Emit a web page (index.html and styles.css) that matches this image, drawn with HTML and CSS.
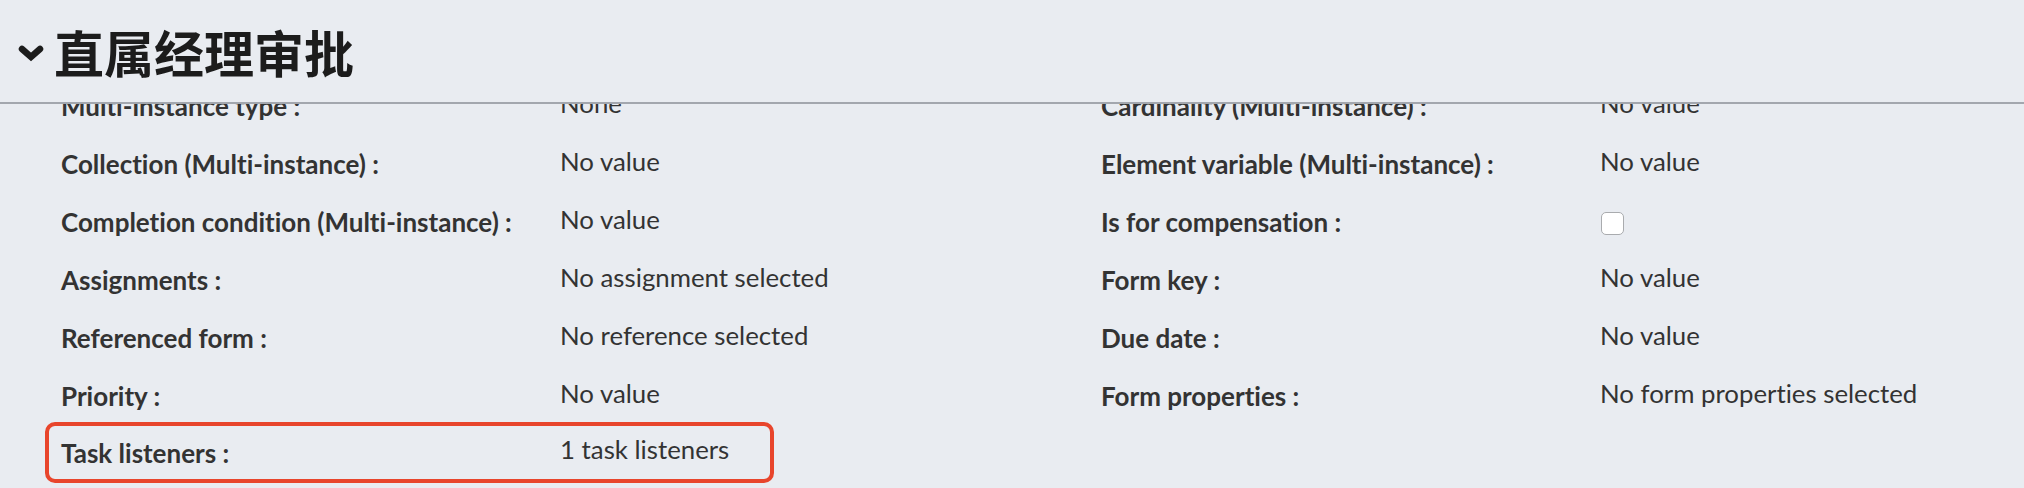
FILE: index.html
```html
<!DOCTYPE html>
<html lang="zh-CN">
<head>
  <meta charset="UTF-8">
  <meta name="viewport" content="width=device-width, initial-scale=1.0">
  <title>直属经理审批 - Properties</title>
  <link rel="stylesheet" href="styles.css">
</head>
<body>
  <div class="panel">
    <div class="panel-header">
      <svg class="chevron" viewBox="0 0 26 18" width="26" height="18">
        <polyline points="4,5 13,13 22,5"></polyline>
      </svg>
      <h1>直属经理审批</h1>
    </div>

    <div class="panel-body">
      <div class="props">
        <div class="prop">
          <span class="prop-label">Multi-instance type :</span>
          <span class="prop-value">None</span>
        </div>
        <div class="prop">
          <span class="prop-label">Cardinality (Multi-instance) :</span>
          <span class="prop-value">No value</span>
        </div>
        <div class="prop">
          <span class="prop-label">Collection (Multi-instance) :</span>
          <span class="prop-value">No value</span>
        </div>
        <div class="prop">
          <span class="prop-label">Element variable (Multi-instance) :</span>
          <span class="prop-value">No value</span>
        </div>
        <div class="prop">
          <span class="prop-label">Completion condition (Multi-instance) :</span>
          <span class="prop-value">No value</span>
        </div>
        <div class="prop">
          <span class="prop-label">Is for compensation :</span>
          <span class="prop-value"><input type="checkbox" class="check"></span>
        </div>
        <div class="prop">
          <span class="prop-label">Assignments :</span>
          <span class="prop-value">No assignment selected</span>
        </div>
        <div class="prop">
          <span class="prop-label">Form key :</span>
          <span class="prop-value">No value</span>
        </div>
        <div class="prop">
          <span class="prop-label">Referenced form :</span>
          <span class="prop-value">No reference selected</span>
        </div>
        <div class="prop">
          <span class="prop-label">Due date :</span>
          <span class="prop-value">No value</span>
        </div>
        <div class="prop">
          <span class="prop-label">Priority :</span>
          <span class="prop-value">No value</span>
        </div>
        <div class="prop">
          <span class="prop-label">Form properties :</span>
          <span class="prop-value">No form properties selected</span>
        </div>
        <div class="prop highlight">
          <span class="prop-label">Task listeners :</span>
          <span class="prop-value">1 task listeners</span>
        </div>
      </div>
    </div>
  </div>
</body>
</html>
```

FILE: styles.css
```css
* {
  box-sizing: border-box;
}

body {
  margin: 0;
  background-color: #e9ecf1;
  font-family: Lato, "Noto Sans", sans-serif;
  font-variant-ligatures: none;
  color: #333;
}

.panel {
  height: 488px;
  display: flex;
  flex-direction: column;
  overflow: hidden;
}

.panel-header {
  height: 104px;
  flex: none;
  display: flex;
  align-items: center;
  gap: 10px;
  padding-left: 18px;
  border-bottom: 2px solid #a3a7ae;
  background-color: #e9ecf1;
}

.chevron {
  fill: none;
  stroke: #1c1c1c;
  stroke-width: 6.5;
  stroke-linecap: round;
  stroke-linejoin: miter;
  margin-top: 3px;
}

.panel-header h1 {
  margin: 0;
  font-family: "Noto Sans CJK SC", sans-serif;
  font-size: 50px;
  font-weight: 700;
  line-height: 1;
  color: #1c1c1c;
}

.panel-body {
  flex: 1;
  overflow: hidden;
}

.props {
  display: grid;
  grid-template-columns: 1040px 1fr;
  padding-left: 61px;
  margin-top: -27px;
}

.prop {
  height: 58px;
  display: grid;
  grid-template-columns: 499px 1fr;
  align-items: center;
}

.prop-label {
  font-weight: 700;
  font-size: 26px;
}

.prop-value {
  font-size: 25.8px;
  padding-bottom: 7px;
}

.check {
  appearance: none;
  width: 23px;
  height: 23px;
  margin: 10px 0 0 1px;
  background: #fff;
  border: 1px solid #a9abae;
  border-radius: 5px;
  display: block;
}

.highlight {
  width: 729px;
  height: 61px;
  margin: -3px 0 0 -16px;
  padding-left: 12px;
  border: 4px solid #e8452c;
  border-radius: 10px;
}
```
